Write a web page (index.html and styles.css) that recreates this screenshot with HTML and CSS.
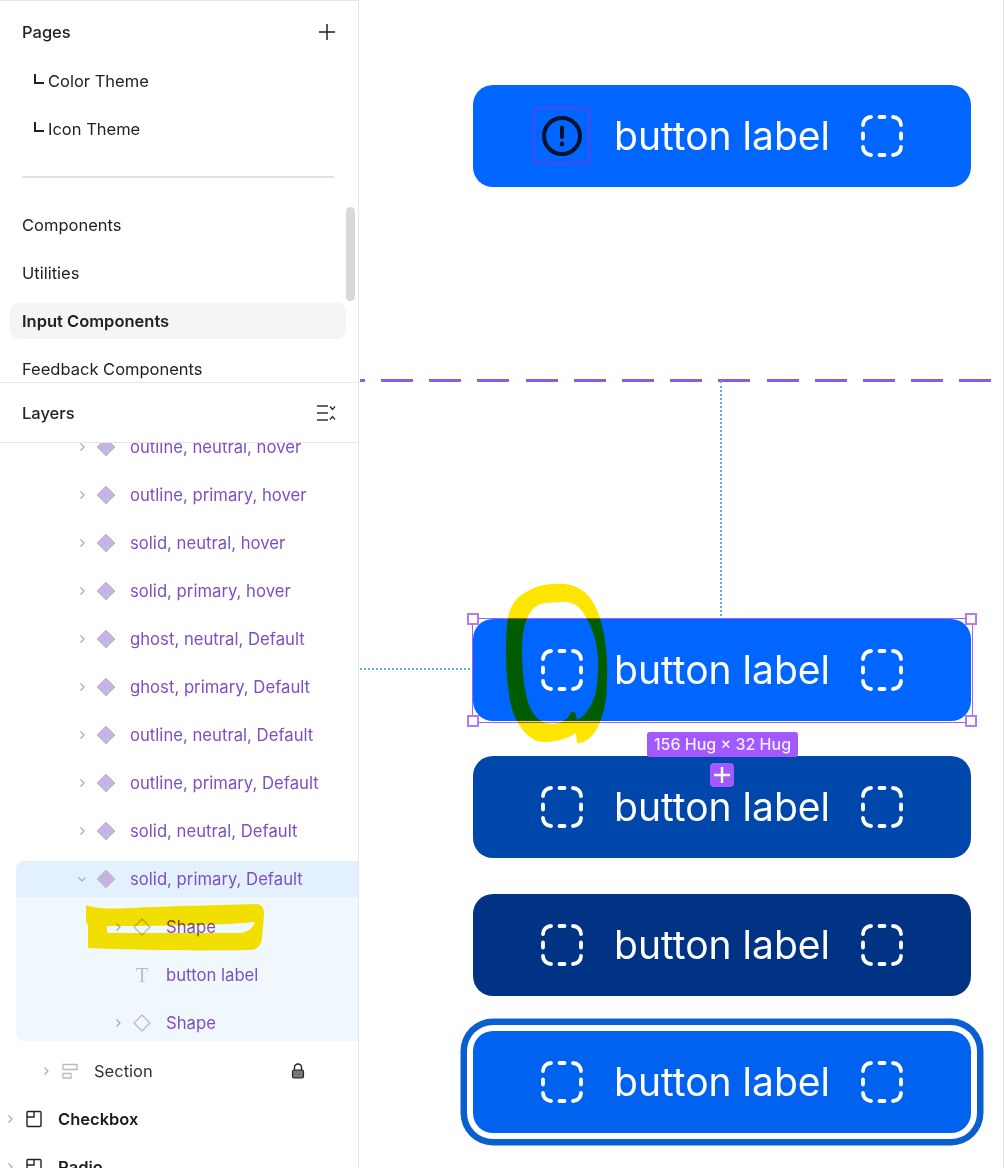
FILE: index.html
```html
<!DOCTYPE html>
<html lang="en">
<head>
    <meta charset="UTF-8">
    <meta name="viewport" content="width=device-width, initial-scale=1.0">
    <title>Button component</title>
    <link rel="stylesheet" href="styles.css">
</head>
<body>
    <svg class="defs" width="0" height="0">
        <symbol id="shape" viewBox="0 0 42 42">
            <path d="M2 10a8 8 0 0 1 8-8M18.500 2h5M32 2a8 8 0 0 1 8 8M40 18.500v5M40 32a8 8 0 0 1-8 8M23.500 40h-5M10 40a8 8 0 0 1-8-8M2 23.500v-5" fill="none" stroke="#fff" stroke-width="3.800" stroke-linecap="round"/>
        </symbol>
        <symbol id="chev-right" viewBox="0 0 12 12">
            <path d="M4.500 2.500L8 6L4.500 9.500" fill="none" stroke="#aaa" stroke-width="1.200"/>
        </symbol>
        <symbol id="chev-down" viewBox="0 0 12 12">
            <path d="M2.500 4.500L6 8L9.500 4.500" fill="none" stroke="#aaa" stroke-width="1.200"/>
        </symbol>
        <symbol id="comp" viewBox="0 0 24 24">
            <path d="M12 3L21 12L12 21L3 12Z" fill="#c4b5e0" stroke="#c4b5e0" stroke-linejoin="round" stroke-width="1"/>
        </symbol>
        <symbol id="inst" viewBox="0 0 24 24">
            <path d="M12 4L20 12L12 20L4 12Z" fill="none" stroke="#bdb9c9" stroke-width="1.300"/>
        </symbol>
        <symbol id="corner" viewBox="0 0 12 12">
            <path d="M2 1V10H11" fill="none" stroke="#222" stroke-width="2"/>
        </symbol>
        <symbol id="frame" viewBox="0 0 18 18">
            <path d="M3 1.500H15a1 1 0 0 1 1 1V15.500a1 1 0 0 1-1 1H3a1 1 0 0 1-1-1V2.500a1 1 0 0 1 1-1ZM2 7H9V1.500" fill="none" stroke="#222" stroke-width="1.400"/>
        </symbol>
    </svg>

    <div class="app">
        <aside class="sidebar">
            <section class="pages">
                <div class="panel-head pages-head">
                    <span>Pages</span>
                    <svg class="plus" width="16" height="16" viewBox="0 0 16 16"><path d="M8 0V16M0 8H16" stroke="#222" stroke-width="1.500"/></svg>
                </div>
                <div class="page-row sub"><svg class="corner" width="12" height="12"><use href="#corner"/></svg>Color Theme</div>
                <div class="page-row sub"><svg class="corner" width="12" height="12"><use href="#corner"/></svg>Icon Theme</div>
                <div class="divider"></div>
                <div class="page-row">Components</div>
                <div class="page-row">Utilities</div>
                <div class="page-row active"><span class="pill">Input Components</span></div>
                <div class="page-row">Feedback Components</div>
                <div class="scrollbar"></div>
            </section>

            <div class="panel-head layers-head">
                <span>Layers</span>
                <svg width="19" height="16" viewBox="0 0 19 16"><path d="M0 1H11M0 8H11M0 15H11M13 1.500L15.500 4.500L18 1.500M13 14.500L15.500 11.500L18 14.500" fill="none" stroke="#333" stroke-width="1.400"/></svg>
            </div>

            <div class="tree">
                <div class="row l2 variant first"><svg class="chev"><use href="#chev-right"/></svg><svg class="ico"><use href="#comp"/></svg>outline, neutral, hover</div>
                <div class="row l2 variant"><svg class="chev"><use href="#chev-right"/></svg><svg class="ico"><use href="#comp"/></svg>outline, primary, hover</div>
                <div class="row l2 variant"><svg class="chev"><use href="#chev-right"/></svg><svg class="ico"><use href="#comp"/></svg>solid, neutral, hover</div>
                <div class="row l2 variant"><svg class="chev"><use href="#chev-right"/></svg><svg class="ico"><use href="#comp"/></svg>solid, primary, hover</div>
                <div class="row l2 variant"><svg class="chev"><use href="#chev-right"/></svg><svg class="ico"><use href="#comp"/></svg>ghost, neutral, Default</div>
                <div class="row l2 variant"><svg class="chev"><use href="#chev-right"/></svg><svg class="ico"><use href="#comp"/></svg>ghost, primary, Default</div>
                <div class="row l2 variant"><svg class="chev"><use href="#chev-right"/></svg><svg class="ico"><use href="#comp"/></svg>outline, neutral, Default</div>
                <div class="row l2 variant"><svg class="chev"><use href="#chev-right"/></svg><svg class="ico"><use href="#comp"/></svg>outline, primary, Default</div>
                <div class="row l2 variant"><svg class="chev"><use href="#chev-right"/></svg><svg class="ico"><use href="#comp"/></svg>solid, neutral, Default</div>

                <div class="group">
                    <div class="row l2 variant group-head"><svg class="chev"><use href="#chev-down"/></svg><svg class="ico"><use href="#comp"/></svg>solid, primary, Default</div>
                    <div class="group-body">
                        <div class="row l3 variant"><svg class="chev"><use href="#chev-right"/></svg><svg class="ico"><use href="#inst"/></svg>Shape</div>
                        <div class="row l3 variant"><span class="chev"></span><span class="ico text-ico">T</span>button label</div>
                        <div class="row l3 variant"><svg class="chev"><use href="#chev-right"/></svg><svg class="ico"><use href="#inst"/></svg>Shape</div>
                    </div>
                </div>

                <div class="row l1 section">
                    <svg class="chev"><use href="#chev-right"/></svg>
                    <svg class="ico" viewBox="0 0 24 24"><path d="M5 5.500H19V10.500H5ZM5 14.500H13V19H5Z" fill="none" stroke="#bbb" stroke-width="1.300"/></svg>
                    Section
                    <svg class="lock" width="14" height="16" viewBox="0 0 14 16"><path d="M3.500 7V4.500a3.500 3.500 0 0 1 7 0V7" fill="none" stroke="#222" stroke-width="1.400"/><rect x="1.500" y="7" width="11" height="8" rx="1.500" fill="#777" stroke="#222" stroke-width="1.200"/></svg>
                </div>
                <div class="row l0 frame"><svg class="chev"><use href="#chev-right"/></svg><svg class="ico"><use href="#frame" x="3" y="3" width="18" height="18"/></svg>Checkbox</div>
                <div class="row l0 frame"><svg class="chev"><use href="#chev-right"/></svg><svg class="ico"><use href="#frame" x="3" y="3" width="18" height="18"/></svg>Radio</div>
            </div>

            <!-- highlighter over the first Shape row -->
            <svg class="mark mark-shape" width="190" height="60" viewBox="80 900 190 60">
                <path fill-rule="evenodd" d="M86 905C96 909 110 909 130 908C170 906 225 905 256 904C262 904 264 908 264 914L262 938C261 947 256 950 248 950C200 951 130 950 88 948L88 925L86 922ZM107 926V933H240C248 932 253 928 255 922C230 925 160 926 107 926Z"/>
            </svg>
        </aside>

        <main class="canvas">
            <div class="dash-line"></div>
            <div class="guide guide-v"></div>
            <div class="guide guide-h"></div>

            <div class="btn btn-top">
                <span class="alert-slot">
                    <svg width="42" height="42" viewBox="0 0 42 42"><circle cx="21" cy="21" r="18" fill="none" stroke="#05102c" stroke-width="4"/><path d="M21 12.500V22" stroke="#05102c" stroke-width="4" stroke-linecap="round"/><circle cx="21" cy="29" r="2.400" fill="#05102c"/></svg>
                </span>
                <span class="label">button label</span>
                <svg class="shape-icon"><use href="#shape"/></svg>
            </div>

            <div class="states">
                <div class="btn selected">
                    <svg class="shape-icon"><use href="#shape"/></svg>
                    <span class="label">button label</span>
                    <svg class="shape-icon"><use href="#shape"/></svg>
                    <span class="handle tl"></span>
                    <span class="handle tr"></span>
                    <span class="handle bl"></span>
                    <span class="handle br"></span>
                    <span class="hug">156 Hug × 32 Hug</span>
                    <span class="add"><svg width="16" height="16" viewBox="0 0 16 16"><path d="M8 0V16M0 8H16" stroke="#fff" stroke-width="2.400"/></svg></span>
                </div>
                <div class="btn hover">
                    <svg class="shape-icon"><use href="#shape"/></svg>
                    <span class="label">button label</span>
                    <svg class="shape-icon"><use href="#shape"/></svg>
                </div>
                <div class="btn pressed">
                    <svg class="shape-icon"><use href="#shape"/></svg>
                    <span class="label">button label</span>
                    <svg class="shape-icon"><use href="#shape"/></svg>
                </div>
                <div class="btn focused">
                    <svg class="shape-icon"><use href="#shape"/></svg>
                    <span class="label">button label</span>
                    <svg class="shape-icon"><use href="#shape"/></svg>
                </div>
            </div>

            <!-- highlighter loop round the first icon -->
            <svg class="mark mark-loop" width="110" height="165" viewBox="502 582 110 165">
                <path fill-rule="evenodd" d="M577 743C587 743 594 735 598 727C604 713 607 700 607 680C608 655 605 630 597 610C591 596 582 586 565 584C550 583 538 585 528 591C514 598 509 607 507 625C505 650 506 675 509 695C512 715 520 733 537 741C550 744 565 740 576 733ZM560 602C568 601 576 603 582 611C590 622 598 640 598 662C598 680 597 695 591 705C587 712 582 718 577 720L575 712L571 712C568 720 562 723 553 724C542 724 534 718 529 705C524 690 522 670 522 650C522 630 526 615 535 607C541 602 550 603 560 602Z"/>
            </svg>
        </main>
    </div>
</body>
</html>
```

FILE: styles.css
```css
* {
    margin: 0;
    padding: 0;
    box-sizing: border-box;
}

html, body {
    height: 100%;
    overflow: hidden;
}

body {
    background-color: #fff;
    font-family: Inter, "Liberation Sans", sans-serif;
    font-size: 16.500px;
    color: #222;
}

.defs {
    position: absolute;
}

.app {
    display: flex;
    height: 1168px;
    position: relative;
    overflow: hidden;
}

/* left panel */
.sidebar {
    width: 359px;
    flex-shrink: 0;
    border-right: 1px solid #e6e6e6;
    display: flex;
    flex-direction: column;
}

.pages {
    height: 383px;
    flex-shrink: 0;
    padding-top: 7px;
    border-top: 1px solid #e6e6e6;
    border-bottom: 1px solid #e6e6e6;
    overflow: hidden;
    position: relative;
}

.panel-head {
    display: flex;
    align-items: center;
    justify-content: space-between;
    padding: 0 22px;
    font-weight: 500;
    color: #222;
}

.pages-head {
    height: 48px;
    margin-bottom: 1px;
}

.plus {
    margin-right: 1px;
}

.page-row {
    height: 48px;
    padding-left: 22px;
    display: flex;
    align-items: center;
}

.page-row.sub {
    padding-left: 33px;
}

.corner {
    margin-right: 3px;
    margin-top: -4px;
}

.divider {
    height: 2px;
    margin: 23px 24px 23px 22px;
    background-color: #e2e2e2;
}

.page-row.active {
    padding-left: 10px;
    padding-right: 12px;
    font-weight: 600;
}

.pill {
    flex: 1;
    height: 36px;
    padding-left: 12px;
    display: flex;
    align-items: center;
    border-radius: 8px;
    background-color: #f5f5f5;
}

.scrollbar {
    position: absolute;
    left: 346px;
    top: 206px;
    width: 9px;
    height: 94px;
    border-radius: 5px;
    background-color: #d9d9d9;
}

.layers-head {
    height: 60px;
    flex-shrink: 0;
    border-bottom: 1px solid #e6e6e6;
}

.tree {
    flex: 1;
    overflow: hidden;
}

.row {
    height: 48px;
    display: flex;
    align-items: center;
    white-space: nowrap;
}

.row.first {
    margin-top: -20px;
}

.l0 { padding-left: 4px; }
.l1 { padding-left: 40px; }
.l2 { padding-left: 76px; }
.l3 { padding-left: 112px; }

.chev {
    width: 12px;
    height: 12px;
    flex-shrink: 0;
    margin-right: 6px;
}

.ico {
    width: 24px;
    height: 24px;
    flex-shrink: 0;
    margin-right: 12px;
}

.text-ico {
    font-family: "Liberation Serif", serif;
    font-size: 20px;
    line-height: 24px;
    text-align: center;
    color: #bdb9c9;
}

.variant {
    font-size: 16.700px;
    color: #7d4fc4;
}

.frame {
    font-weight: 600;
    color: #1c1c1c;
}

.section {
    position: relative;
    color: #333;
}

.lock {
    position: absolute;
    left: 291px;
    top: 16px;
}

.group {
    margin: 6px 0 6px 16px;
    border-radius: 8px 0 0 8px;
    overflow: hidden;
    background-color: #f0f8fe;
}

.group .l2 { padding-left: 60px; }
.group .l3 { padding-left: 96px; }

.group-head {
    height: 36px;
    background-color: #e3f1fe;
}

.group-body {
    padding-top: 6px;
}

.group-body .row:last-child {
    margin-bottom: -6px;
}

/* canvas */
.canvas {
    flex: 1;
    position: relative;
    padding: 85px 0 0 114px;
    border-right: 1px solid #e6e6e6;
    margin-right: 1px;
}

.dash-line {
    position: absolute;
    left: 1px;
    top: 378.500px;
    width: 632px;
    height: 3.500px;
    background-image: repeating-linear-gradient(to right, #8e5bdc 0, #8e5bdc 4.800px, transparent 4.800px, transparent 21px, #8e5bdc 21px, #8e5bdc 48.200px);
}

.guide {
    position: absolute;
}

.guide-v {
    left: 361px;
    top: 381px;
    height: 235px;
    border-left: 2px dotted #5aaee4;
}

.guide-h {
    left: 1px;
    top: 668px;
    width: 110px;
    border-top: 2px dotted #5aaee4;
}

.btn {
    width: 498px;
    height: 102px;
    position: relative;
    display: flex;
    align-items: center;
    justify-content: center;
    gap: 31px;
    border-radius: 20px;
    background-color: #0066ff;
    color: #fff;
}

.label {
    font-size: 39px;
    line-height: 44px;
    white-space: nowrap;
}

.shape-icon {
    width: 42px;
    height: 42px;
    flex-shrink: 0;
}

.alert-slot {
    width: 42px;
    height: 42px;
    position: relative;
}

/* the * reset does not reach pseudo elements, so this one is content-box */
.alert-slot::after {
    content: "";
    position: absolute;
    left: -8px;
    top: -8px;
    width: 53px;
    height: 53px;
    border: 2px solid #4b49ee;
}

.states {
    margin-top: 432px;
    display: flex;
    flex-direction: column;
    gap: 35px;
}

/* selection box has square corners, the button keeps its round ones */
.selected::before {
    content: "";
    position: absolute;
    inset: -1.500px;
    border: 1.500px solid #a95ff5;
}

.handle {
    position: absolute;
    width: 12px;
    height: 12px;
    background-color: #fff;
    border: 2px solid #b27af5;
}

.tl { left: -6px; top: -6px; }
.tr { right: -6px; top: -6px; }
.bl { left: -6px; bottom: -6px; }
.br { right: -6px; bottom: -6px; }

.hug {
    position: absolute;
    left: 174px;
    top: 113px;
    width: 151px;
    height: 25px;
    line-height: 25px;
    text-align: center;
    font-size: 16px;
    font-weight: 500;
    white-space: nowrap;
    border-radius: 3px;
    background-color: #a259ff;
    color: #f4ecff;
    z-index: 1;
}

.add {
    position: absolute;
    left: 237px;
    top: 144px;
    width: 24px;
    height: 24px;
    display: flex;
    align-items: center;
    justify-content: center;
    border-radius: 4px;
    background-color: #a259ff;
    z-index: 1;
}

.hover {
    background-color: #0047ab;
}

.pressed {
    margin-top: 1px;
    background-color: #003383;
}

.focused {
    background-color: #0062ee;
    box-shadow: 0 0 0 6px #fff, 0 0 0 12.500px #0a5fd0;
}

/* yellow marker, multiplied so the blue under it turns green */
.mark {
    position: absolute;
    fill: #ffe600;
    mix-blend-mode: multiply;
    z-index: 2;
}

.mark-shape {
    left: 80px;
    top: 900px;
}

.mark-loop {
    left: 143px;
    top: 582px;
}
```
